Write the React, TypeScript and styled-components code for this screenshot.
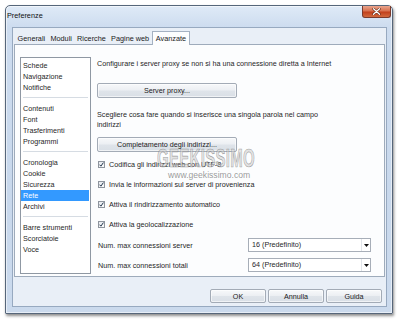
import React from "react";
import styled, { createGlobalStyle } from "styled-components";

const GlobalStyle = createGlobalStyle`
  html, body { margin: 0; padding: 0; background: #ffffff; }
  body {
    font-family: "Liberation Sans", Arial, sans-serif;
    font-size: 7.2px;
    color: #1f1f1f;
  }
  #root { width: 400px; height: 321px; overflow: hidden; }
`;

const Page = styled.div`
  width: 400px;
  height: 321px;
  box-sizing: border-box;
  padding: 5px 7px 7px 5px;
`;

const Window = styled.div`
  height: 309px;
  box-sizing: border-box;
  border: 1px solid #56667a;
  border-radius: 5px 5px 1px 1px;
  background: linear-gradient(180deg, #dfeaf7 0px, #cddcef 21px, #c8d8ec 60%, #cbdaed 100%);
  box-shadow: 1px 2px 3px rgba(0, 0, 0, 0.45), inset 0 0 0 1px rgba(255, 255, 255, 0.55);
  display: flex;
  flex-direction: column;
`;

const TitleBar = styled.div`
  height: 21px;
  display: flex;
  align-items: flex-start;
  justify-content: space-between;
  padding: 0 1px 0 1px;
`;

const Title = styled.span`
  font-size: 7.3px;
  line-height: 19px;
  color: #111;
`;

const CloseButton = styled.div`
  width: 29px;
  height: 12px;
  box-sizing: border-box;
  border: 1px solid #7b3a2c;
  border-top: none;
  border-radius: 0 0 3px 3px;
  background: linear-gradient(180deg, #e9a58e 0%, #d8714f 45%, #c2401c 55%, #d26a3e 100%);
  display: flex;
  align-items: center;
  justify-content: center;
`;

const Client = styled.div`
  flex: 1;
  margin: 0 5px 6px 6px;
  border: 1px solid #97a9c0;
  background: #e9eff7;
  padding: 3px 1px 0 1px;
  display: flex;
  flex-direction: column;
`;

const TabStrip = styled.div`
  height: 13px;
  display: flex;
  align-items: flex-end;
  padding-left: 1px;
`;

const Tab = styled.div<{ $active?: boolean }>`
  height: ${(p) => (p.$active ? "14px" : "13px")};
  box-sizing: border-box;
  line-height: ${(p) => (p.$active ? "13px" : "13px")};
  padding: 0 ${(p) => (p.$active ? "3px" : "1.6px")};
  margin: 0 ${(p) => (p.$active ? "0 -1px 0" : "0")};
  margin-bottom: ${(p) => (p.$active ? "-1px" : "0")};
  border: 1px solid ${(p) => (p.$active ? "#a4b1c2" : "transparent")};
  border-bottom: none;
  background: ${(p) => (p.$active ? "#fcfdfe" : "transparent")};
  position: relative;
  z-index: ${(p) => (p.$active ? 2 : 0)};
  font-size: 7.3px;
  color: #1a1a1a;
  white-space: nowrap;
`;

const Panel = styled.div`
  position: relative;
  height: 233px;
  box-sizing: border-box;
  border: 1px solid #9eabbb;
  background: #fcfdfe;
  padding: 12px 13px 2px 5px;
  display: flex;
`;

const ListBox = styled.div`
  width: 71px;
  flex: none;
  box-sizing: border-box;
  border: 1px solid #8f98a3;
  background: #ffffff;
  padding: 2px 0;
`;

const ListItem = styled.div<{ $selected?: boolean }>`
  height: 11px;
  line-height: 11px;
  padding-left: 2px;
  margin-right: 1px;
  background: ${(p) => (p.$selected ? "#3399ff" : "transparent")};
  color: ${(p) => (p.$selected ? "#ffffff" : "#1f1f1f")};
  white-space: nowrap;
`;

const ListSeparator = styled.div`
  height: 1px;
  margin: 4px 2px 5px 2px;
  background: #d6dce3;
`;

const Content = styled.div`
  flex: 1;
  margin-left: 6px;
  display: flex;
  flex-direction: column;
`;

const Paragraph = styled.div<{ $mt: number }>`
  margin-top: ${(p) => p.$mt}px;
  line-height: 10px;
  color: #1f1f1f;
`;

const PushButton = styled.div<{ $mt?: number; $w: number }>`
  margin-top: ${(p) => p.$mt ?? 0}px;
  width: ${(p) => p.$w}px;
  height: 15px;
  box-sizing: border-box;
  border: 1px solid #a3abb6;
  border-radius: 2px;
  background: linear-gradient(180deg, #f7f8fa 0%, #eceff3 48%, #dfe4ea 52%, #d9dfe6 100%);
  box-shadow: inset 0 0 0 1px rgba(255, 255, 255, 0.6);
  display: flex;
  align-items: center;
  justify-content: center;
  color: #1a1a1a;
  white-space: nowrap;
  flex: none;
`;

const CheckRow = styled.div<{ $mt: number }>`
  margin-top: ${(p) => p.$mt}px;
  height: 10px;
  display: flex;
  align-items: center;
  gap: 4px;
  padding-left: 1px;
  white-space: nowrap;
`;

const CheckBox = styled.div`
  width: 7px;
  height: 7px;
  box-sizing: border-box;
  border: 1px solid #8e959e;
  background: linear-gradient(180deg, #e6e9ee, #fbfbfc);
  display: flex;
  align-items: center;
  justify-content: center;
  flex: none;
`;

const SelectRow = styled.div<{ $mt: number }>`
  margin-top: ${(p) => p.$mt}px;
  height: 14px;
  display: flex;
  align-items: center;
`;

const SelectLabel = styled.div`
  flex: 1;
  padding-left: 1px;
  white-space: nowrap;
`;

const Select = styled.div`
  width: 123px;
  height: 14px;
  box-sizing: border-box;
  border: 1px solid #a7aeb8;
  background: #ffffff;
  display: flex;
  align-items: stretch;
`;

const SelectValue = styled.div`
  flex: 1;
  padding-left: 3px;
  line-height: 12px;
  white-space: nowrap;
`;

const SelectArrow = styled.div`
  width: 8px;
  border-left: 1px solid #e1e5ea;
  display: flex;
  align-items: center;
  justify-content: center;
`;

const Footer = styled.div`
  display: flex;
  justify-content: flex-end;
  gap: 2px;
  padding: 12px 3px 0 0;
`;

const FooterButton = styled(PushButton)`
  height: 14px;
`;

const WatermarkTitle = styled.div`
  position: absolute;
  left: 142px;
  top: 101px;
  font-family: "Liberation Sans", Arial, sans-serif;
  font-weight: 700;
  font-size: 25px;
  line-height: 25px;
  letter-spacing: 0.5px;
  color: rgba(205, 205, 205, 0.55);
  -webkit-text-stroke: 0.7px rgba(105, 105, 105, 0.6);
  transform: scaleX(0.6);
  transform-origin: left top;
  pointer-events: none;
  white-space: nowrap;
`;

const WatermarkUrl = styled.div`
  position: absolute;
  left: 153px;
  top: 125px;
  font-family: "Liberation Sans", Arial, sans-serif;
  font-size: 8.6px;
  line-height: 10px;
  color: rgba(120, 120, 120, 0.75);
  pointer-events: none;
  white-space: nowrap;
`;

const groups: string[][] = [
  ["Schede", "Navigazione", "Notifiche"],
  ["Contenuti", "Font", "Trasferimenti", "Programmi"],
  ["Cronologia", "Cookie", "Sicurezza", "Rete", "Archivi"],
  ["Barre strumenti", "Scorciatoie", "Voce"],
];

const tabs = ["Generali", "Moduli", "Ricerche", "Pagine web", "Avanzate"];

const checks: { label: string; mt: number }[] = [
  { label: "Codifica gli indirizzi web con UTF-8", mt: 7 },
  { label: "Invia le informazioni sul server di provenienza", mt: 10 },
  { label: "Attiva il rindirizzamento automatico", mt: 10 },
  { label: "Attiva la geolocalizzazione", mt: 10 },
];

const CheckMark = () => (
  <svg width="5" height="5" viewBox="0 0 5 5">
    <path d="M0.6 2.7 L1.9 4.2 L4.4 0.6" fill="none" stroke="#23384e" strokeWidth="1" />
  </svg>
);

const Arrow = () => (
  <svg width="5" height="3" viewBox="0 0 5 3">
    <path d="M0 0 H5 L2.5 3 Z" fill="#111" />
  </svg>
);

const CloseX = () => (
  <svg width="9" height="7" viewBox="0 0 9 7">
    <path d="M1.5 0.8 L7.5 6.2 M7.5 0.8 L1.5 6.2" stroke="#5a2414" strokeWidth="2.4" strokeLinecap="round" />
    <path d="M1.5 0.8 L7.5 6.2 M7.5 0.8 L1.5 6.2" stroke="#ffffff" strokeWidth="1.3" strokeLinecap="round" />
  </svg>
);

export default function App() {
  return (
    <>
      <GlobalStyle />
      <Page>
        <Window>
          <TitleBar>
            <Title>Preferenze</Title>
            <CloseButton>
              <CloseX />
            </CloseButton>
          </TitleBar>
          <Client>
            <TabStrip>
              {tabs.map((t) => (
                <Tab key={t} $active={t === "Avanzate"}>
                  {t}
                </Tab>
              ))}
            </TabStrip>
            <Panel>
              <ListBox>
                {groups.map((g, gi) => (
                  <React.Fragment key={gi}>
                    {gi > 0 && <ListSeparator />}
                    {g.map((item) => (
                      <ListItem key={item} $selected={item === "Rete"}>
                        {item}
                      </ListItem>
                    ))}
                  </React.Fragment>
                ))}
              </ListBox>
              <Content>
                <Paragraph $mt={2}>
                  Configurare i server proxy se non si ha una connessione diretta a Internet
                </Paragraph>
                <PushButton $mt={14} $w={140}>
                  Server proxy...
                </PushButton>
                <Paragraph $mt={12}>
                  Scegliere cosa fare quando si inserisce una singola parola nel campo
                  <br />
                  indirizzi
                </Paragraph>
                <PushButton $mt={7} $w={140}>
                  Completamento degli indirizzi...
                </PushButton>
                {checks.map((c) => (
                  <CheckRow key={c.label} $mt={c.mt}>
                    <CheckBox>
                      <CheckMark />
                    </CheckBox>
                    {c.label}
                  </CheckRow>
                ))}
                <SelectRow $mt={9}>
                  <SelectLabel>Num. max connessioni server</SelectLabel>
                  <Select>
                    <SelectValue>16 (Predefinito)</SelectValue>
                    <SelectArrow>
                      <Arrow />
                    </SelectArrow>
                  </Select>
                </SelectRow>
                <SelectRow $mt={6}>
                  <SelectLabel>Num. max connessioni totali</SelectLabel>
                  <Select>
                    <SelectValue>64 (Predefinito)</SelectValue>
                    <SelectArrow>
                      <Arrow />
                    </SelectArrow>
                  </Select>
                </SelectRow>
              </Content>
              <WatermarkTitle>GEEKISSIMO</WatermarkTitle>
              <WatermarkUrl>www.geekissimo.com</WatermarkUrl>
            </Panel>
            <Footer>
              <FooterButton $w={56}>OK</FooterButton>
              <FooterButton $w={56}>Annulla</FooterButton>
              <FooterButton $w={56}>Guida</FooterButton>
            </Footer>
          </Client>
        </Window>
      </Page>
    </>
  );
}
